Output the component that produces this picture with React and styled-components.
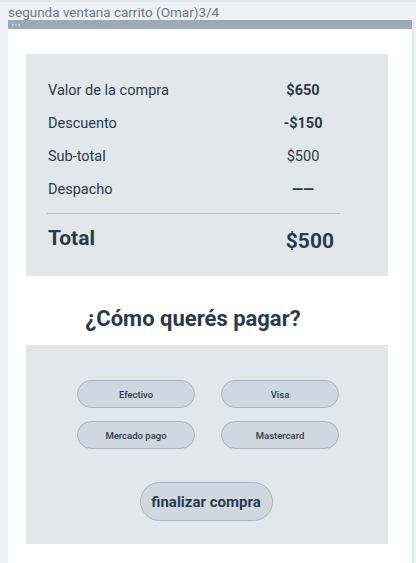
import styled, { createGlobalStyle } from "styled-components";

const GlobalStyle = createGlobalStyle`
  html, body {
    margin: 0;
    padding: 0;
    background: #eef1f5;
    font-family: Roboto, "Liberation Sans", sans-serif;
    color: #2b3a4a;
  }
`;

const Page = styled.div`
  height: 563px;
  display: flex;
  flex-direction: column;
  border-top: 2px solid #e3e7eb;
  box-sizing: border-box;
  overflow: hidden;
`;

const PageTitle = styled.div`
  font-size: 13.5px;
  color: #6b7886;
  padding: 2px 8px 0;
  height: 16px;
  line-height: 16px;
`;

const Frame = styled.div`
  flex: 1;
  margin-left: 8px;
  margin-right: 2px;
  background: #fff;
  border-right: 2px solid #e4e8ec;
  display: flex;
  flex-direction: column;
`;

const FrameBar = styled.div`
  height: 9px;
  background: #9daab5;
  display: flex;
  align-items: center;
  padding-left: 4px;
  gap: 1px;

  span {
    width: 2px;
    height: 2px;
    border-radius: 50%;
    background: #c4ccd3;
  }
`;

const Content = styled.div`
  padding: 25px 26px 0 18px;
  display: flex;
  flex-direction: column;
`;

const Card = styled.div`
  background: #e2e7ec;
  width: 362px;
  box-sizing: border-box;
`;

const Summary = styled(Card)`
  height: 222px;
  padding: 20px 48px 0 22px;
`;

const Row = styled.div`
  display: flex;
  align-items: center;
  height: 33px;
  font-size: 14.5px;
`;

const Label = styled.div`
  flex: 1;
`;

const Value = styled.div`
  width: 50px;
  text-align: center;
  font-weight: ${(p) => (p.bold ? 700 : 400)};
  margin-right: 12px;
`;

const Divider = styled.div`
  height: 1px;
  background: #b7c1cb;
  margin: 7px 0 0 -1px;
  width: 293px;
`;

const TotalRow = styled.div`
  display: flex;
  align-items: baseline;
  margin-top: 12px;
  font-weight: 700;

  div:first-child {
    flex: 1;
    font-size: 21px;
  }
  div:last-child {
    font-size: 21px;
    margin-right: 6px;
    position: relative;
    top: 3px;
  }
`;

const Heading = styled.h2`
  margin: 0;
  height: 69px;
  line-height: 86px;
  font-size: 22px;
  font-weight: 700;
  text-align: center;
  width: 334px;
`;

const PayCard = styled(Card)`
  height: 199px;
  padding-top: 35px;
  display: flex;
  flex-direction: column;
  align-items: center;
`;

const Options = styled.div`
  display: grid;
  grid-template-columns: 118px 118px;
  column-gap: 26px;
  row-gap: 13px;
  margin-left: 2px;
`;

const Pill = styled.button`
  height: 28px;
  border-radius: 14px;
  border: 1px solid #a8b3bd;
  background: #cfd8e0;
  color: #2b3a4a;
  font-family: inherit;
  font-size: 9.5px;
  font-weight: 500;
  padding: 0;
  cursor: pointer;
`;

const FinishButton = styled(Pill)`
  margin-top: 33px;
  width: 133px;
  height: 39px;
  border-radius: 20px;
  font-size: 15px;
  font-weight: 700;
  margin-left: -2px;
`;

const rows = [
  { label: "Valor de la compra", value: "$650", bold: true },
  { label: "Descuento", value: "-$150", bold: true },
  { label: "Sub-total", value: "$500", bold: false },
  { label: "Despacho", value: "——", bold: true },
];

export default function App() {
  return (
    <>
      <GlobalStyle />
      <Page>
        <PageTitle>segunda ventana carrito (Omar)3/4</PageTitle>
        <Frame>
          <FrameBar>
            <span />
            <span />
            <span />
          </FrameBar>
          <Content>
            <Summary>
              {rows.map((r) => (
                <Row key={r.label}>
                  <Label>{r.label}</Label>
                  <Value bold={r.bold}>{r.value}</Value>
                </Row>
              ))}
              <Divider />
              <TotalRow>
                <div>Total</div>
                <div>$500</div>
              </TotalRow>
            </Summary>
            <Heading>¿Cómo querés pagar?</Heading>
            <PayCard>
              <Options>
                <Pill>Efectivo</Pill>
                <Pill>Visa</Pill>
                <Pill>Mercado pago</Pill>
                <Pill>Mastercard</Pill>
              </Options>
              <FinishButton>finalizar compra</FinishButton>
            </PayCard>
          </Content>
        </Frame>
      </Page>
    </>
  );
}
